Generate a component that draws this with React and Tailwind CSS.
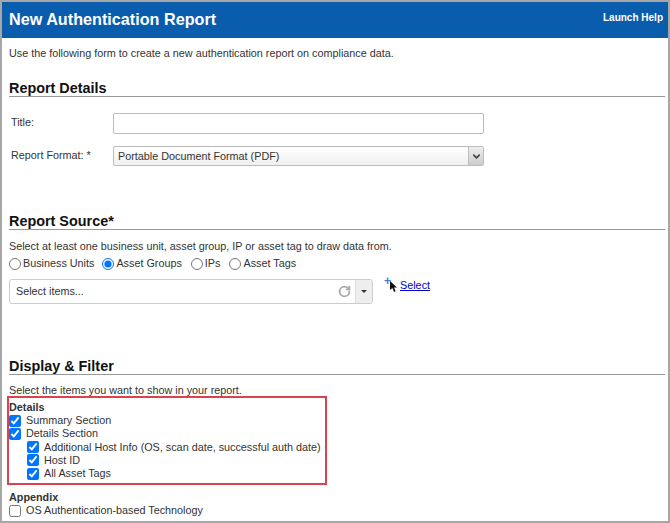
import React from 'react'
import { ChevronDown, RotateCw } from 'lucide-react'

function SectionHeading({ children, className = '' }) {
  return (
    <h2 className={`h-[19px] pt-[2px] border-b border-[#999] text-[14.4px] leading-[17px] font-bold text-[#111] ${className}`}>
      {children}
    </h2>
  )
}

function Radio({ label, checked, className = '' }) {
  return (
    <label className={`flex items-center gap-[2px] ${className}`}>
      <input type="radio" name="source" defaultChecked={checked} className="m-0 w-[12px] h-[12px] accent-[#0075ff]" />
      {label}
    </label>
  )
}

function Check({ label, checked, className = '' }) {
  return (
    <label className={`flex items-center h-[13.25px] gap-[5px] ${className}`}>
      <input type="checkbox" defaultChecked={checked} className="m-0 w-[12px] h-[12px] accent-[#0075ff]" />
      {label}
    </label>
  )
}

export default function App() {
  return (
    <div className="w-[670px] h-[523px] overflow-hidden border-2 border-[#a6a6a6] bg-white text-[10.8px] leading-[13px] text-[#333] font-['Liberation_Sans',Arial,sans-serif]">
      {/* Header */}
      <div className="flex items-center justify-between h-[36px] pl-[7px] pr-[5px] bg-[#0a5cad] text-white">
        <h1 className="text-[16.2px] font-bold leading-[20px] mb-[2px]">New Authentication Report</h1>
        <a className="text-[10px] font-bold mb-[5px]">Launch Help</a>
      </div>

      <div className="pl-[7px] pr-[3px]">
        <p className="mt-[9px]">Use the following form to create a new authentication report on compliance data.</p>

        {/* Report Details */}
        <SectionHeading className="mt-[18px]">Report Details</SectionHeading>
        <div className="flex items-center mt-[16px] h-[21px]">
          <span className="w-[104px] pl-[2px] mb-[2px]">Title:</span>
          <input type="text" className="w-[371px] h-[21px] border border-[#bbb] rounded-[2px] bg-white" />
        </div>
        <div className="flex items-center mt-[12px] h-[20px]">
          <span className="w-[104px] pl-[2px] mb-[2px]">Report Format: *</span>
          <div className="flex items-center justify-between w-[371px] h-[20px] border border-[#bbb] rounded-[2px] bg-gradient-to-b from-white to-[#f0f0f0] text-[#333]">
            <span className="pl-[4px]">Portable Document Format (PDF)</span>
            <span className="flex items-center justify-center w-[15px] h-full border-l border-[#bbb] bg-gradient-to-b from-[#eee] to-[#ccc]">
              <ChevronDown className="w-[11px] h-[11px] text-[#444]" strokeWidth={3.5} />
            </span>
          </div>
        </div>

        {/* Report Source */}
        <SectionHeading className="mt-[45px]">Report Source*</SectionHeading>
        <p className="mt-[10px]">Select at least one business unit, asset group, IP or asset tag to draw data from.</p>
        <div className="flex items-center h-[13px] mt-[4px]">
          <Radio label="Business Units" />
          <Radio label="Asset Groups" checked className="ml-[8px]" />
          <Radio label="IPs" className="ml-[9px]" />
          <Radio label="Asset Tags" className="ml-[9px]" />
        </div>
        <div className="flex items-start mt-[9px]">
          <div className="flex items-center w-[364px] h-[25px] border border-[#ccc] rounded-[3px] bg-white">
            <span className="flex-1 pl-[6px]">Select items...</span>
            <RotateCw className="w-[13px] h-[13px] mr-[4px] text-[#aaa]" strokeWidth={3.5} />
            <span className="flex items-center justify-center w-[17px] h-full border-l border-[#ddd] bg-[#eee] rounded-r-[3px]">
              <span className="w-0 h-0 border-x-[3px] border-x-transparent border-t-[3px] border-t-[#333]" />
            </span>
          </div>
          <div className="flex items-start ml-[11px]">
            <span className="-mt-[3px] text-[#3f7fd0] text-[12px] leading-[11px] font-bold">+</span>
            <svg width="10" height="14" viewBox="0 0 10 14" className="-ml-[2px] mt-[1px]">
              <path d="M1 1 L1 10 L3.4 8 L5 12 L6.6 11.3 L5 7.4 L8 7.4 Z" fill="#111" />
            </svg>
            <a className="ml-[1px] text-[#0000c8] underline">Select</a>
          </div>
        </div>

        {/* Display & Filter */}
        <SectionHeading className="mt-[52px]">Display &amp; Filter</SectionHeading>
        <p className="mt-[9px]">Select the items you want to show in your report.</p>
        <div className="w-[320px] h-[89px] -ml-[2px] -mt-[1px] pt-[3px] border-2 border-[#d9434f]">
          <div className="font-bold">Details</div>
          <Check label="Summary Section" checked />
          <Check label="Details Section" checked />
          <Check label="Additional Host Info (OS, scan date, successful auth date)" checked className="ml-[18px]" />
          <Check label="Host ID" checked className="ml-[18px]" />
          <Check label="All Asset Tags" checked className="ml-[18px]" />
        </div>
        <div className="mt-[6px] font-bold">Appendix</div>
        <Check label="OS Authentication-based Technology" />
      </div>
    </div>
  )
}
